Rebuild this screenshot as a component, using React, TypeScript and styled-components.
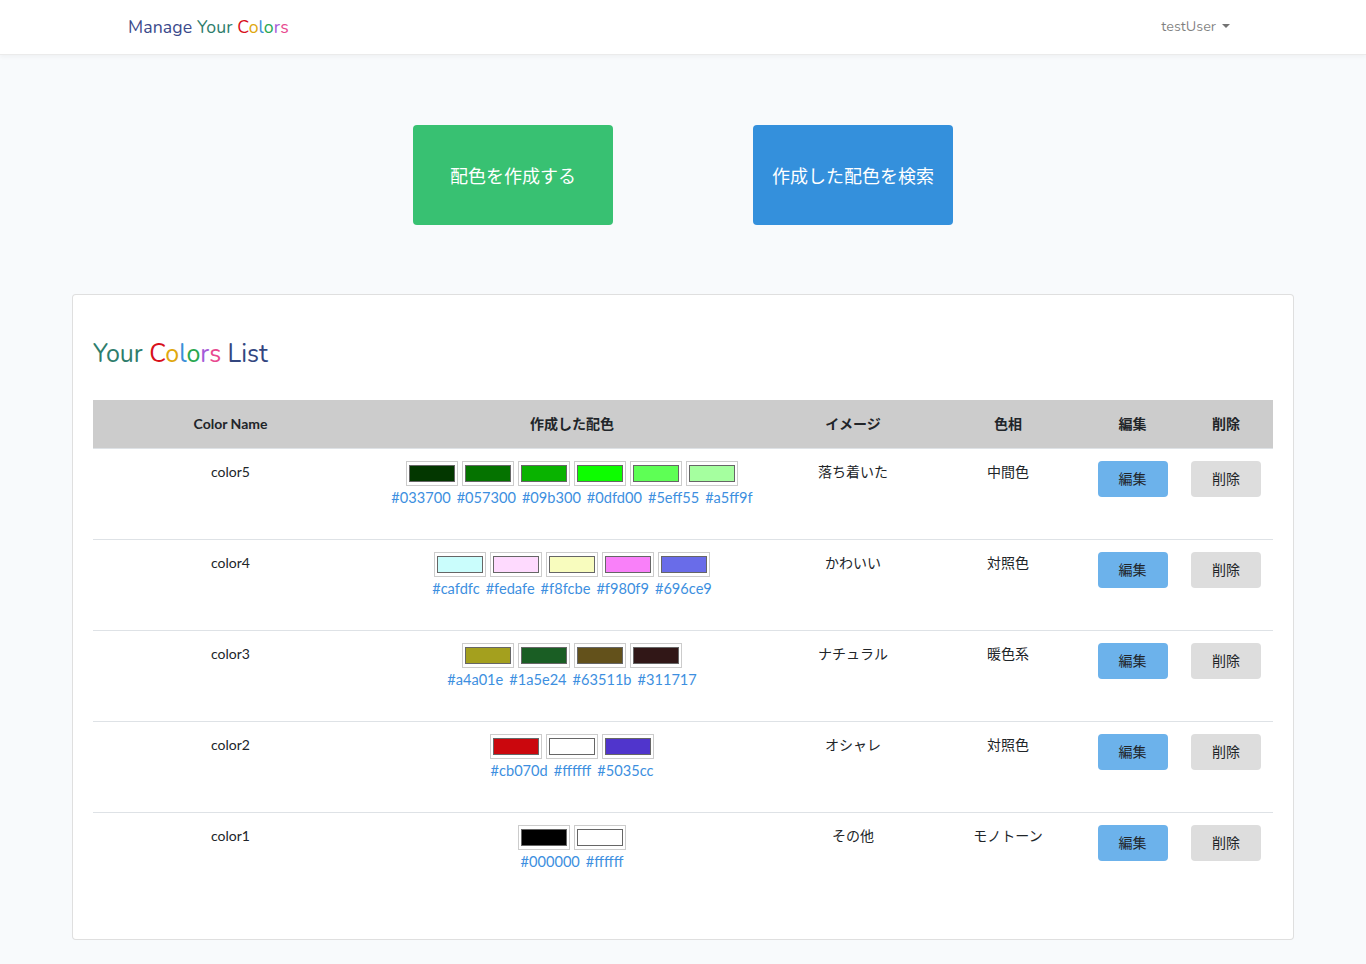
import React from "react";
import styled, { createGlobalStyle } from "styled-components";

const GlobalStyle = createGlobalStyle`
  html, body { margin: 0; padding: 0; }
  body {
    background: #f8fafc;
    font-family: "Nunito", "Lato", "Noto Sans CJK JP", sans-serif;
    font-size: 14px;
    line-height: 1.6;
    color: #212529;
  }
  * { box-sizing: border-box; }
`;

const jp = `"Lato", "Noto Sans CJK JP", sans-serif`;

const NavBar = styled.nav`
  height: 55px;
  background: #fff;
  box-shadow: 0 2px 4px rgba(0, 0, 0, 0.04);
  border-bottom: 1px solid #ebebeb;
`;

const NavInner = styled.div`
  max-width: 1140px;
  margin: 0 auto;
  padding: 0 15px;
  height: 100%;
  display: flex;
  align-items: center;
  justify-content: space-between;
`;

const Brand = styled.a`
  font-size: 17.7px;
  letter-spacing: 0.1px;
  color: #3b4a8b;
  text-decoration: none;
  margin-top: 1px;
`;

const Letter = styled.span<{ $c: string }>`
  color: ${(p) => p.$c};
`;

const UserMenu = styled.a`
  display: flex;
  align-items: center;
  gap: 6px;
  padding: 0 8px;
  color: rgba(0, 0, 0, 0.5);
  font-size: 14.4px;
  text-decoration: none;
`;

const Caret = styled.span`
  width: 0;
  height: 0;
  border-left: 4px solid transparent;
  border-right: 4px solid transparent;
  border-top: 4px solid rgba(0, 0, 0, 0.55);
  margin-top: -2px;
`;

const Actions = styled.div`
  display: flex;
  justify-content: center;
  gap: 140px;
  margin: 70px 0 69px;
`;

const BigButton = styled.button<{ $bg: string }>`
  width: 200px;
  height: 100px;
  border: none;
  border-radius: 4px;
  background: ${(p) => p.$bg};
  color: #fff;
  font-family: ${jp};
  font-size: 18px;
  padding-bottom: 2px;
  cursor: pointer;
`;

const Card = styled.section`
  width: 1222px;
  margin: 0 auto 24px;
  background: #fff;
  border: 1px solid rgba(0, 0, 0, 0.125);
  border-radius: 4px;
  padding: 20px 20px 36px;
`;

const Title = styled.h2`
  margin: 24px 0 31px;
  font-weight: 400;
  font-size: 25px;
  line-height: 1.2;
  color: #33467f;
`;

const Table = styled.table`
  width: 100%;
  border-collapse: collapse;
  table-layout: fixed;
`;

const Th = styled.th`
  height: 48px;
  padding: 0;
  background: #cccccc;
  font-family: ${jp};
  font-weight: 700;
  font-size: 14px;
  text-align: center;
  vertical-align: middle;
  color: #212529;
`;

const Tr = styled.tr`
  height: 91px;
  border-top: 1px solid #dee2e6;
`;

const Td = styled.td`
  padding: 12px 4px 12px;
  text-align: center;
  vertical-align: top;
  font-family: ${jp};
  font-size: 14px;
  color: #212529;
`;

const NameCell = styled(Td)`
  font-family: "Lato", sans-serif;
`;

const Swatches = styled.div`
  display: flex;
  justify-content: center;
  gap: 4px;
`;

const SwatchFrame = styled.div`
  width: 52px;
  height: 25px;
  border: 1px solid #cccccc;
  padding: 3px 2px;
  background: #fff;
`;

const SwatchFill = styled.div<{ $c: string }>`
  width: 100%;
  height: 100%;
  background: ${(p) => p.$c};
  border: 1px solid #666;
`;

const Codes = styled.div`
  display: flex;
  justify-content: center;
  gap: 6px;
  color: #3d8fe0;
  font-family: "Lato", sans-serif;
  font-size: 14.6px;
  line-height: 24px;
`;

const SmallButton = styled.button<{ $variant: "edit" | "delete" }>`
  width: 70px;
  height: 36px;
  border: none;
  border-radius: 4px;
  background: ${(p) => (p.$variant === "edit" ? "#6cb2eb" : "#dddddd")};
  color: #212529;
  font-family: ${jp};
  font-size: 14px;
  padding-bottom: 2px;
  cursor: pointer;
`;

const rainbow = [
  ["C", "#d8101b"],
  ["o", "#e0a80e"],
  ["l", "#3a8fd8"],
  ["o", "#2aa850"],
  ["r", "#a55ad8"],
  ["s", "#e84990"],
];

const Colors = () => (
  <>
    {rainbow.map(([l, c], i) => (
      <Letter key={i} $c={c}>
        {l}
      </Letter>
    ))}
  </>
);

type Row = { name: string; colors: string[]; image: string; hue: string };

const rows: Row[] = [
  { name: "color5", colors: ["#033700", "#057300", "#09b300", "#0dfd00", "#5eff55", "#a5ff9f"], image: "落ち着いた", hue: "中間色" },
  { name: "color4", colors: ["#cafdfc", "#fedafe", "#f8fcbe", "#f980f9", "#696ce9"], image: "かわいい", hue: "対照色" },
  { name: "color3", colors: ["#a4a01e", "#1a5e24", "#63511b", "#311717"], image: "ナチュラル", hue: "暖色系" },
  { name: "color2", colors: ["#cb070d", "#ffffff", "#5035cc"], image: "オシャレ", hue: "対照色" },
  { name: "color1", colors: ["#000000", "#ffffff"], image: "その他", hue: "モノトーン" },
];

const colWidths = [275, 408, 154, 156, 93, 94];

export default function App() {
  return (
    <>
      <GlobalStyle />
      <NavBar>
        <NavInner>
          <Brand href="#">
            Manage <Letter $c="#2e7d6c">Your</Letter> <Colors />
          </Brand>
          <UserMenu href="#">
            testUser <Caret />
          </UserMenu>
        </NavInner>
      </NavBar>
      <Actions>
        <BigButton $bg="#38c172">配色を作成する</BigButton>
        <BigButton $bg="#3490dc">作成した配色を検索</BigButton>
      </Actions>
      <Card>
        <Title>
          <Letter $c="#2e7d6c">Your</Letter> <Colors /> List
        </Title>
        <Table>
          <colgroup>
            {colWidths.map((w, i) => (
              <col key={i} style={{ width: w }} />
            ))}
          </colgroup>
          <thead>
            <tr>
              <Th>Color Name</Th>
              <Th>作成した配色</Th>
              <Th>イメージ</Th>
              <Th>色相</Th>
              <Th>編集</Th>
              <Th>削除</Th>
            </tr>
          </thead>
          <tbody>
            {rows.map((r) => (
              <Tr key={r.name}>
                <NameCell>{r.name}</NameCell>
                <Td>
                  <Swatches>
                    {r.colors.map((c, j) => (
                      <SwatchFrame key={j}>
                        <SwatchFill $c={c} />
                      </SwatchFrame>
                    ))}
                  </Swatches>
                  <Codes>
                    {r.colors.map((c, j) => (
                      <span key={j}>{c}</span>
                    ))}
                  </Codes>
                </Td>
                <Td>{r.image}</Td>
                <Td>{r.hue}</Td>
                <Td>
                  <SmallButton $variant="edit">編集</SmallButton>
                </Td>
                <Td>
                  <SmallButton $variant="delete">削除</SmallButton>
                </Td>
              </Tr>
            ))}
          </tbody>
        </Table>
      </Card>
    </>
  );
}
